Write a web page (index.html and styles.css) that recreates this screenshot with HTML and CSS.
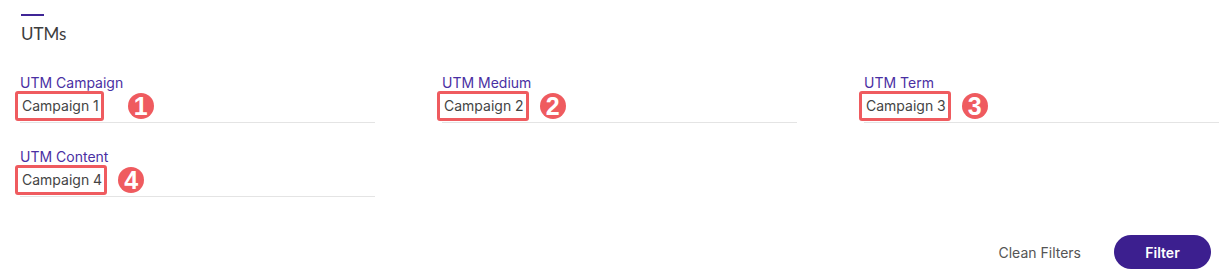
FILE: index.html
```html
<!DOCTYPE html>
<html>
<head>
<meta charset="utf-8">
<link rel="stylesheet" href="styles.css">
</head>
<body>
<div class="panel">
  <div class="section-head">
    <div class="accent"></div>
    <h2 class="title">UTMs</h2>
  </div>
  <div class="fields">
    <div class="field">
      <label class="label">UTM Campaign</label>
      <div class="input">
        <span class="value">Campaign 1</span>
        <span class="badge badge-far">1</span>
      </div>
    </div>
    <div class="field">
      <label class="label">UTM Medium</label>
      <div class="input">
        <span class="value">Campaign 2</span>
        <span class="badge">2</span>
      </div>
    </div>
    <div class="field">
      <label class="label">UTM Term</label>
      <div class="input">
        <span class="value">Campaign 3</span>
        <span class="badge">3</span>
      </div>
    </div>
    <div class="field">
      <label class="label">UTM Content</label>
      <div class="input">
        <span class="value">Campaign 4</span>
        <span class="badge">4</span>
      </div>
    </div>
  </div>
  <div class="actions">
    <button class="btn-clean">Clean Filters</button>
    <button class="btn-filter">Filter</button>
  </div>
</div>
</body>
</html>
```
FILE: styles.css
```css
* { box-sizing: border-box; }
body {
  margin: 0;
  background: #ffffff;
  font-family: Inter, "Liberation Sans", sans-serif;
}
.panel {
  padding: 14px 8px 0 20px;
}
.section-head {
  padding-left: 1px;
}
.accent {
  width: 23px;
  height: 2px;
  background: #3f2596;
}
.title {
  margin: 8px 0 0 0;
  font-family: Lato, "Open Sans", sans-serif;
  font-weight: 400;
  font-size: 17px;
  line-height: 20px;
  color: #3d3d3d;
}
.fields {
  display: grid;
  grid-template-columns: repeat(3, 355px);
  column-gap: 67px;
  row-gap: 26px;
  margin-top: 31px;
}
.field {
  display: flex;
  flex-direction: column;
}
.label {
  font-size: 14px;
  line-height: 16px;
  color: #4a2fa3;
}
.input {
  height: 32px;
  border-bottom: 1px solid #e4e4e4;
  display: flex;
  align-items: center;
  padding-left: 2px;
  padding-bottom: 1px;
}
.value {
  position: relative;
  font-size: 14px;
  line-height: 18px;
  color: #444444;
}
.value::before {
  content: "";
  position: absolute;
  left: -7px;
  right: -5px;
  top: -6px;
  bottom: -6px;
  border: 3px solid #ef5b5f;
  border-radius: 3px;
}
.badge {
  width: 26px;
  height: 26px;
  border-radius: 50%;
  background: #ef5b5f;
  color: #ffffff;
  font-family: "Liberation Sans", Arial, sans-serif;
  font-weight: 700;
  font-size: 25px;
  line-height: 27px;
  text-align: center;
  margin-left: 16px;
}
.badge-far {
  margin-left: 29px;
}
.actions {
  display: flex;
  justify-content: flex-end;
  align-items: center;
  gap: 33px;
  margin-top: 38px;
  padding-right: 8px;
}
.btn-clean {
  border: none;
  background: none;
  padding: 0;
  font-family: Inter, "Liberation Sans", sans-serif;
  font-size: 14px;
  color: #555555;
}
.btn-filter {
  width: 97px;
  height: 34px;
  border: none;
  border-radius: 17px;
  background: #3c1f8f;
  color: #ffffff;
  font-family: Inter, "Liberation Sans", sans-serif;
  font-weight: 600;
  font-size: 14px;
}
```
